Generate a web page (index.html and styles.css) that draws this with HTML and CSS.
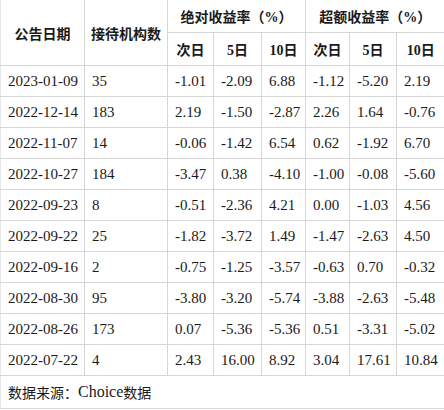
FILE: index.html
```html
<!DOCTYPE html>
<html lang="zh">
<head>
<meta charset="utf-8">
<link rel="stylesheet" href="styles.css">
</head>
<body>
<div class="wrap">
<table class="tbl">
  <colgroup>
    <col class="c1"><col class="c2"><col class="c3"><col class="c4"><col class="c5"><col class="c6"><col class="c7"><col class="c8">
  </colgroup>
  <thead>
    <tr class="hr">
      <th rowspan="2">公告日期</th>
      <th rowspan="2">接待机构数</th>
      <th colspan="3">绝对收益率（%）</th>
      <th colspan="3">超额收益率（%）</th>
    </tr>
    <tr class="hr">
      <th>次日</th><th>5日</th><th>10日</th>
      <th>次日</th><th>5日</th><th>10日</th>
    </tr>
  </thead>
  <tbody>
    <tr><td>2023-01-09</td><td>35</td><td>-1.01</td><td>-2.09</td><td>6.88</td><td>-1.12</td><td>-5.20</td><td>2.19</td></tr>
    <tr><td>2022-12-14</td><td>183</td><td>2.19</td><td>-1.50</td><td>-2.87</td><td>2.26</td><td>1.64</td><td>-0.76</td></tr>
    <tr><td>2022-11-07</td><td>14</td><td>-0.06</td><td>-1.42</td><td>6.54</td><td>0.62</td><td>-1.92</td><td>6.70</td></tr>
    <tr><td>2022-10-27</td><td>184</td><td>-3.47</td><td>0.38</td><td>-4.10</td><td>-1.00</td><td>-0.08</td><td>-5.60</td></tr>
    <tr><td>2022-09-23</td><td>8</td><td>-0.51</td><td>-2.36</td><td>4.21</td><td>0.00</td><td>-1.03</td><td>4.56</td></tr>
    <tr><td>2022-09-22</td><td>25</td><td>-1.82</td><td>-3.72</td><td>1.49</td><td>-1.47</td><td>-2.63</td><td>4.50</td></tr>
    <tr><td>2022-09-16</td><td>2</td><td>-0.75</td><td>-1.25</td><td>-3.57</td><td>-0.63</td><td>0.70</td><td>-0.32</td></tr>
    <tr><td>2022-08-30</td><td>95</td><td>-3.80</td><td>-3.20</td><td>-5.74</td><td>-3.88</td><td>-2.63</td><td>-5.48</td></tr>
    <tr><td>2022-08-26</td><td>173</td><td>0.07</td><td>-5.36</td><td>-5.36</td><td>0.51</td><td>-3.31</td><td>-5.02</td></tr>
    <tr><td>2022-07-22</td><td>4</td><td>2.43</td><td>16.00</td><td>8.92</td><td>3.04</td><td>17.61</td><td>10.84</td></tr>
  </tbody>
</table>
<div class="foot">数据来源：<span class="latin">Choice</span>数据</div>
</div>
</body>
</html>
```
FILE: styles.css
```css
html, body {
  margin: 0;
  padding: 0;
  background: #fff;
}
body {
  font-family: "Liberation Serif", "Noto Sans CJK SC", serif;
  color: #1a1a1a;
  font-size: 15px;
  overflow: hidden;
}
.wrap {
  width: 444px;
}
.tbl {
  border-collapse: collapse;
  table-layout: fixed;
  width: 444px;
}
.c1 { width: 84px; }
.c2 { width: 83px; }
.c3 { width: 46px; }
.c4 { width: 48px; }
.c5 { width: 44px; }
.c6 { width: 44px; }
.c7 { width: 47px; }
.c8 { width: 48px; }
.tbl th, .tbl td {
  border: 1px solid #d6d6d6;
  padding: 0 0 0 7px;
  white-space: nowrap;
  overflow: hidden;
  vertical-align: middle;
}
.tbl th {
  font-family: "Liberation Serif", "Noto Sans CJK SC", serif;
  font-weight: bold;
  font-size: 14px;
  text-align: center;
  padding: 0;
  height: 32px;
}
.tbl td {
  height: 30px;
  text-align: left;
}
.tbl tr > :first-child { border-left: 1px solid #e6e6e6; }
.tbl tr > :last-child { border-right: none; }
.tbl thead tr:first-child th { border-top: none; }
.foot {
  height: 32px;
  border-left: 1px solid #e6e6e6;
  border-bottom: 1px solid #d6d6d6;
  display: flex;
  align-items: center;
  padding-left: 7px;
  font-size: 14px;
}
.latin {
  font-size: 16px;
}
```
